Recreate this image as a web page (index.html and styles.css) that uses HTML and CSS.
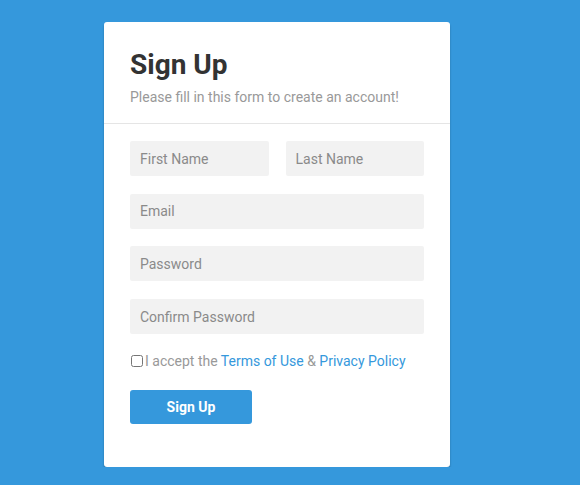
FILE: index.html
```html
<!DOCTYPE html>
<html>
<head>
<meta charset="utf-8">
<link rel="stylesheet" href="styles.css">
</head>
<body>
<div class="page">
  <div class="card">
    <div class="card-head">
      <h1 class="title">Sign Up</h1>
      <p class="subtitle">Please fill in this form to create an account!</p>
    </div>
    <form class="card-body">
      <div class="row2">
        <input class="field" type="text" placeholder="First Name">
        <input class="field" type="text" placeholder="Last Name">
      </div>
      <input class="field" type="email" placeholder="Email">
      <input class="field" type="password" placeholder="Password">
      <input class="field" type="password" placeholder="Confirm Password">
      <label class="accept"><input class="check" type="checkbox">I accept the <a class="link" href="#">Terms of Use</a> &amp; <a class="link" href="#">Privacy Policy</a></label>
      <div class="actions"><button class="btn" type="button">Sign Up</button></div>
    </form>
  </div>
</div>
</body>
</html>
```
FILE: styles.css
```css
html, body {
  margin: 0;
  padding: 0;
  background: #3598dc;
  font-family: Roboto, "Liberation Sans", sans-serif;
}
.page {
  padding: 22px 0 0 104px;
}
.card {
  width: 346px;
  height: 445px;
  box-sizing: border-box;
  background: #fff;
  border-radius: 3px;
  box-shadow: 0 2px 2px rgba(0, 0, 0, 0.3);
}
.card-head {
  padding: 26px 26px 16px;
  border-bottom: 1px solid #e5e5e5;
}
.title {
  margin: 0;
  font-size: 28px;
  line-height: 33px;
  font-weight: 700;
  color: #333;
}
.subtitle {
  margin: 6px 0 0;
  font-size: 14px;
  line-height: 20px;
  color: #999;
}
.card-body {
  display: flex;
  flex-direction: column;
  gap: 17.7px;
  padding: 17px 26px 0;
  margin: 0;
}
.row2 {
  display: grid;
  grid-template-columns: 1fr 1fr;
  gap: 17px;
}
.field {
  display: block;
  width: 100%;
  box-sizing: border-box;
  height: 35px;
  border: none;
  border-radius: 2px;
  background: #f2f2f2;
  padding: 0 10px;
  font-family: inherit;
  font-size: 14px;
  color: #555;
  outline: none;
}
.field::placeholder {
  color: #8a8a8a;
}
.accept {
  display: block;
  margin-top: -1px;
  font-size: 14px;
  line-height: 20px;
  color: #999;
}
.check {
  width: 12px;
  height: 12px;
  margin: 0 2px 0 1px;
  vertical-align: -1px;
}
.link {
  color: #3598dc;
  text-decoration: none;
}
.actions {
  display: flex;
  margin-top: 2px;
}
.btn {
  width: 122px;
  height: 34px;
  border: none;
  border-radius: 3px;
  background: #3598dc;
  color: #fff;
  font-family: inherit;
  font-size: 14px;
  font-weight: 700;
  cursor: pointer;
}
```
